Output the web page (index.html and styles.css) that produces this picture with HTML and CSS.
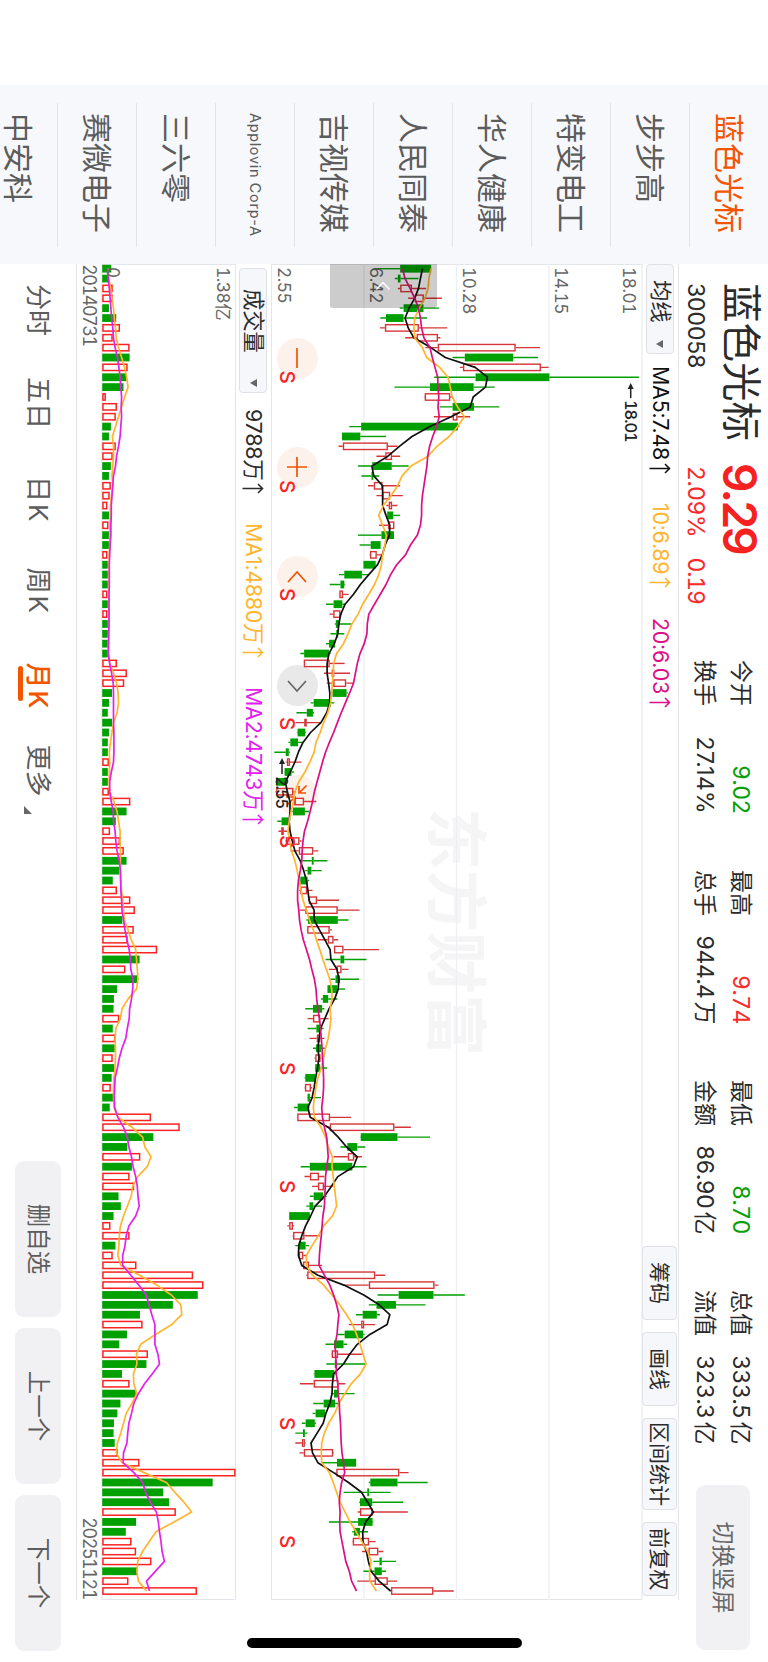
FILE: index.html
```html
<!DOCTYPE html>
<html lang="zh-CN">
<head>
<meta charset="utf-8">
<title>蓝色光标 300058</title>
<link rel="stylesheet" href="styles.css">
</head>
<body>
<div class="stage">
  <nav class="watchlist">
    <a class="stock active">蓝色光标</a>
    <a class="stock">步步高</a>
    <a class="stock">特变电工</a>
    <a class="stock">华人健康</a>
    <a class="stock">人民同泰</a>
    <a class="stock">吉视传媒</a>
    <a class="stock latin">Applovin Corp-A</a>
    <a class="stock">三六零</a>
    <a class="stock">赛微电子</a>
    <a class="stock">中安科</a>
  </nav>
  <main class="main">
    <header class="header">
      <div class="identity">
        <h1 class="name">蓝色光标</h1>
        <strong class="price">9.29</strong>
        <span class="code">300058</span>
        <span class="change"><span>2.09%</span><span class="delta">0.19</span></span>
      </div>
      <div class="quotes">
        <div class="quote"><span>今开</span><span class="value down">9.02</span></div>
        <div class="quote"><span>最高</span><span class="value up">9.74</span></div>
        <div class="quote"><span>最低</span><span class="value down">8.70</span></div>
        <div class="quote"><span>总值</span><span class="value">333.5<i class="unit">亿</i></span></div>
        <div class="quote"><span>换手</span><span class="percent">27.14%</span></div>
        <div class="quote"><span>总手</span><span class="value">944.4<i class="unit">万</i></span></div>
        <div class="quote"><span>金额</span><span class="value">86.90<i class="unit">亿</i></span></div>
        <div class="quote"><span>流值</span><span class="value">323.3<i class="unit">亿</i></span></div>
      </div>
      <button class="rotate">切换竖屏</button>
    </header>

    <div class="toolbar">
      <div class="picker">均线<i class="caret"></i></div>
      <span class="legend ma5">MA5:7.48<svg class="arrow" viewBox="0 0 11 22"><path d="M5.500 21.500V1.500M1 6L5.500 1.500L10 6"/></svg></span>
      <span class="legend ma10">10:6.89<svg class="arrow" viewBox="0 0 11 22"><path d="M5.500 21.500V1.500M1 6L5.500 1.500L10 6"/></svg></span>
      <span class="legend ma20">20:6.03<svg class="arrow" viewBox="0 0 11 22"><path d="M5.500 21.500V1.500M1 6L5.500 1.500L10 6"/></svg></span>
      <div class="tools">
        <button class="tool">筹码</button>
        <button class="tool">画线</button>
        <button class="tool wide">区间统计</button>
        <button class="tool">前复权</button>
      </div>
    </div>

    <section class="price-pane">
      <div class="controls">
        <button class="control"><svg viewBox="0 0 22 22"><path d="M1 11H21"/></svg></button>
        <button class="control"><svg viewBox="0 0 22 22"><path d="M1 11H21M11 1V21"/></svg></button>
        <button class="control"><svg viewBox="0 0 22 22"><path d="M16 2L6 11L16 20"/></svg></button>
        <button class="control muted"><svg viewBox="0 0 22 22"><path d="M6 2L16 11L6 20"/></svg></button>
        <button class="control"><svg viewBox="0 0 22 22"><path d="M1.500 1.500L9 9M9 2V9H2M20.500 20.500L13 13M20 13H13V20"/></svg></button>
      </div>
      <svg id="price-chart" class="price-chart" viewBox="0 0 1336 371"></svg>
      <div class="drawer"><svg viewBox="0 0 10 16"><path d="M8.500 1.500L1.500 8L8.500 14.500"/></svg></div>
    </section>

    <div class="volume-bar">
      <div class="picker">成交量<i class="caret"></i></div>
      <span class="legend vol">9788万<svg class="arrow" viewBox="0 0 11 22"><path d="M5.500 21.500V1.500M1 6L5.500 1.500L10 6"/></svg></span>
      <span class="legend ma10">MA1:4880万<svg class="arrow" viewBox="0 0 11 22"><path d="M5.500 21.500V1.500M1 6L5.500 1.500L10 6"/></svg></span>
      <span class="legend vma2">MA2:4743万<svg class="arrow" viewBox="0 0 11 22"><path d="M5.500 21.500V1.500M1 6L5.500 1.500L10 6"/></svg></span>
    </div>

    <svg id="volume-chart" class="volume-chart" viewBox="0 0 1336 134"></svg>

    <div class="dates"><span>20140731</span><span>20251121</span></div>

    <footer class="footer">
      <div class="periods">
        <a class="period">分时</a>
        <a class="period">五日</a>
        <a class="period spaced">日K</a>
        <a class="period spaced">周K</a>
        <a class="period spaced current">月K</a>
        <a class="period">更多<i class="corner"></i></a>
      </div>
      <div class="actions">
        <button class="action">删自选</button>
        <button class="action">上一个</button>
        <button class="action">下一个</button>
      </div>
    </footer>
  </main>
  <div class="home-indicator"></div>
</div>
<script src="chart.js"></script>
</body>
</html>
```
FILE: styles.css
```css
* { box-sizing: border-box; }

html, body {
  margin: 0;
  width: 768px;
  height: 1662px;
  overflow: hidden;
  background: #fff;
}

/* Landscape screen shown on a portrait display */
.stage {
  position: relative;
  display: flex;
  width: 1662px;
  height: 768px;
  padding-left: 85px;
  overflow: hidden;
  transform-origin: 0 0;
  transform: translateX(768px) rotate(90deg);
  background: #fff;
  color: #2b2b2b;
  font-family: Inter, "Noto Sans CJK SC", sans-serif;
  font-size: 23px;
  line-height: 1;
}

button {
  padding: 0;
  border: 0;
  color: inherit;
  font: inherit;
}

.watchlist {
  flex: none;
  width: 179px;
  height: 768px;
  padding: 0 17.500px;
  overflow: hidden;
  background: #f6f8fb;
}

.stock {
  display: flex;
  align-items: center;
  height: 79px;
  padding-left: 10.500px;
  border-bottom: 1px solid #e2e4e8;
  color: #5c5c5c;
  font-size: 30px;
  white-space: nowrap;
}

.stock.active { color: #f25400; }
.stock.latin { font-size: 14.500px; letter-spacing: 0.650px; }

.main {
  display: flex;
  flex-direction: column;
  width: 1398px;
}

.header {
  display: flex;
  width: 1398px;
  height: 90px;
  padding-left: 19px;
  background: linear-gradient(#e6e6e8, #e6e6e8) 0 100% / 1336px 1px no-repeat;
}

.identity {
  display: grid;
  flex: none;
  width: 377px;
  height: 89px;
  grid-template: 55px 34px / 180px 1fr;
  align-items: center;
}

.name { margin: 0; font-size: 39.500px; font-weight: 400; white-space: nowrap; }
.price { color: #f62121; font-size: 46px; font-weight: 600; letter-spacing: -2.700px; }
.code { font-size: 23px; letter-spacing: -0.100px; }

.change {
  display: flex;
  gap: 20.500px;
  padding-left: 3px;
  color: #fa2a2a;
  font-variant-numeric: tabular-nums;
  letter-spacing: -0.500px;
}

.delta { letter-spacing: -1.200px; }

.quotes {
  display: grid;
  flex: none;
  grid-template-columns: repeat(4, 154px);
  grid-auto-rows: 36px;
  column-gap: 56px;
  padding-top: 9px;
}

.quote {
  display: flex;
  align-items: center;
  justify-content: space-between;
  white-space: nowrap;
}

.value { font-variant-numeric: tabular-nums; letter-spacing: -0.500px; }
.percent { letter-spacing: 0.300px; }
.unit { margin-left: 3px; font-style: normal; }
.up { color: #fa2a2a; }
.down { color: #07a007; }

.rotate {
  width: 165px;
  height: 54px;
  margin: 18px 0 0 41px;
  border-radius: 9px;
  background: #f1f1f4;
  color: #666;
}

.toolbar {
  display: flex;
  align-items: center;
  width: 1336px;
  height: 36px;
}

.picker {
  display: flex;
  align-items: center;
  justify-content: space-between;
  width: 90px;
  height: 28px;
  padding: 0 5px 0 15px;
  border: 1px solid #dfe1e6;
  border-radius: 4px;
  background: #f6f7fa;
  font-size: 21.300px;
  white-space: nowrap;
}

.caret {
  border: 4px solid transparent;
  border-top: 7px solid #666;
  border-bottom: 0;
}

.legend {
  display: flex;
  align-items: center;
  font-size: 21.500px;
  letter-spacing: -0.300px;
  white-space: nowrap;
}

.arrow {
  width: 11px;
  height: 22px;
  margin-left: 3px;
  fill: none;
  stroke: currentColor;
  stroke-width: 1.500;
}

.ma5 { width: 137px; margin-left: 12px; color: #111; }
.ma10 { color: #ffb52e; }
.toolbar .ma10 { width: 115px; }
.ma20 { color: #dc0f87; }

.tools { display: flex; gap: 12px; margin-left: auto; padding-right: 4px; }

.tool {
  width: 74px;
  height: 35px;
  border: 1px solid #dfe1e6;
  border-radius: 4px;
  background: #f6f7fa;
  font-size: 21px;
  white-space: nowrap;
}

.tool.wide { width: 92px; }

.price-pane { position: relative; height: 371px; }
.price-chart { position: relative; display: block; width: 1336px; height: 371px; }
.volume-chart { display: block; width: 1336px; height: 134px; }

.price-chart, .volume-chart {
  overflow: visible;
  font-family: Inter, "Noto Sans CJK SC", sans-serif;
  font-variant-numeric: tabular-nums;
}

.frame { fill: none; stroke: #e3e6ea; stroke-width: 1; }
.grid { stroke: #eceff3; stroke-width: 1.300; }
.axis { fill: #666; font-size: 17.300px; letter-spacing: -0.500px; }
.watermark { fill: #f5f5f6; font-size: 62px; font-weight: 700; }
.rise { fill: none; stroke: #d63638; stroke-width: 1.400; }
.rise-wick { fill: none; stroke: #d63638; stroke-width: 1.400; }
.fall { fill: #00a000; }
.fall-wick { stroke: #00a000; stroke-width: 1.400; }
.vol-rise { fill: #fff; stroke: #fb2222; stroke-width: 1.500; }
.line { fill: none; stroke-width: 1.700; stroke-linejoin: round; }
.line-ma5 { stroke: #111; }
.line-ma10 { stroke: #ffb52e; }
.line-ma20 { stroke: #dc0f87; }
.line-vma2 { stroke: #e321ee; }
.signal { fill: #fb2424; font-size: 20.500px; font-weight: 500; text-anchor: middle; }
.peak { fill: #222; font-size: 16.500px; font-weight: 500; letter-spacing: -1.100px; }
.pointer { fill: none; stroke: #222; stroke-width: 1.500; }
.pointer-head { fill: #222; }

.drawer {
  position: absolute;
  left: 0;
  top: 205px;
  display: flex;
  align-items: center;
  justify-content: center;
  width: 44px;
  height: 107px;
  border-radius: 0 3px 3px 0;
  background: rgba(0, 0, 0, 0.2);
}

.drawer svg { width: 10px; height: 16px; fill: none; stroke: #fff; stroke-width: 1.300; }

.controls {
  position: absolute;
  left: 73.500px;
  top: 324px;
  display: flex;
  gap: 68.300px;
}

.control {
  display: flex;
  align-items: center;
  justify-content: center;
  width: 41px;
  height: 41px;
  border-radius: 50%;
  background: #fdf1eb;
  color: #f25400;
}

.control svg { width: 22px; height: 22px; fill: none; stroke: currentColor; stroke-width: 1.700; }
.control.muted { background: #e9e9e9; color: #666; }

.volume-bar {
  display: flex;
  align-items: center;
  width: 1336px;
  height: 35px;
  padding: 0 0 0 4px;
}

.volume-bar .picker { width: 125px; padding-left: 20px; }
.vol { width: 114px; margin-left: 16px; color: #2b2b2b; }
.volume-bar .ma10 { width: 164px; }
.vma2 { color: #e321ee; }

.dates {
  display: flex;
  justify-content: space-between;
  align-items: center;
  width: 1336px;
  height: 26px;
  padding: 0 1px 0 0;
  border-bottom: 1px solid #e6e6e8;
  color: #666;
  font-size: 18px;
  font-variant-numeric: tabular-nums;
  letter-spacing: -1.450px;
}

.footer {
  display: flex;
  align-items: center;
  justify-content: space-between;
  height: 76px;
  padding: 0 11px 0 20px;
}

.periods {
  display: grid;
  grid-template-columns: 93px 99px 91.500px 95px 82px 80px;
}

.period {
  position: relative;
  color: #5c5c5c;
  font-size: 26px;
  white-space: nowrap;
}

.period.spaced { letter-spacing: 2px; }
.period.current { color: #f25400; font-weight: 500; }

.period.current::after {
  content: "";
  position: absolute;
  left: 3px;
  bottom: -7px;
  width: 35px;
  height: 5px;
  border-radius: 3px;
  background: #f25400;
}

.corner {
  position: absolute;
  left: 61px;
  bottom: -1px;
  border-left: 8px solid transparent;
  border-bottom: 8px solid #666;
}

.actions { display: flex; gap: 11px; }

.action {
  width: 156px;
  height: 46px;
  border-radius: 9px;
  background: #f1f1f4;
  color: #5c5c5c;
  font-size: 23.500px;
}

.home-indicator {
  position: absolute;
  left: 1638px;
  top: 246px;
  width: 10px;
  height: 275px;
  border-radius: 5px;
  background: #000;
}
```
FILE: chart.js
```js
// Monthly rows: candle colour, low, body low, body high, high, volume, MA5, MA10, MA20, volume MA1, volume MA2.
// Prices use axis units where 475 = 2.55 and 1444 = 18.01; volumes use 32 = 0 and 382 = 1.38亿.
// A trailing R or G overrides the volume bar colour.
const rows = `G 742 812 893 893 56 870 892 818 47 46
G 798 806 813 860 48 865 887 825 50 48
R 806 812 843 880 60 860 885 838 54 51
R 833 850 874 921 60 850 877 850 58 53
G 811 821 873 914 50 835 862 860 62 55
G 760 775 821 882 69 825 850 865 64 57
R 759 772 861 935 79 833 848 868 67 60
R 825 855 911 917 60 848 850 874 69 62
R 878 910 1114 1178 104 892 870 890 75 66
G 949 981 1107 1172 104 930 881 896 83 72
R 968 976 1180 1200 99 1008 915 903 91 76
G 901 1009 1202 1436 96 1040 937 910 96 79
G 797 890 1004 1059 88 1035 943 911 100 81
R 875 876 943 948 42 1003 948 913 91 83
G 915 949 1005 1071 71 995 962 911 83 82 R
R 900 949 962 995 68 945 980 914 75 83
G 679 710 963 967 55 890 962 907 67 81
G 660 660 708 775 50 843 940 897 59 79
R 651 662 780 805 68 810 908 889 62 75
R 750 773 791 812 60 780 885 884 62 70
G 702 739 790 834 55 738 840 882 60 67
G 711 737 742 757 50 743 817 878 58 62
R 728 743 766 812 55 766 805 874 60 60
R 750 765 786 819 52 766 788 870 57 58
R 776 782 791 805 46 766 768 868 54 56
G 778 778 794 812 50 775 756 868 53 56
R 757 780 797 797 49 785 766 865 53 55
G 702 763 796 796 50 784 776 857 52 55
G 706 735 761 761 50 773 772 839 52 53
R 732 733 751 763 46 765 766 826 51 52
G 716 716 748 750 47 753 763 803 50 51
G 652 666 712 728 47 730 756 787 50 51
G 628 656 666 668 47 708 745 775 50 51
R 652 653 663 677 46 690 730 760 50 50
G 618 638 661 668 47 668 714 745 50 50
R 627 637 656 660 46 657 702 730 50 50
G 641 644 652 685 47 652 686 726 50 50
G 630 645 650 666 47 649 676 725 50 49
G 618 626 642 642 47 640 664 718 49 49
G 551 561 626 630 47 626 646 707 49 48
R 560 560 628 667 71 621 638 700 52 52
R 613 633 640 681 97 621 637 695 62 57
R 620 637 671 690 90 625 635 690 70 61
G 633 635 672 675 58 628 633 680 74 62
G 578 586 631 640 50 628 630 669 75 62
G 541 568 584 587 47 620 623 658 71 62
R 539 562 568 605 58 605 612 648 62 62 G
G 542 544 564 566 50 578 603 638 58 63
G 520 525 545 558 47 558 592 627 54 63
G 483 513 521 524 47 546 587 617 51 63
R 513 516 524 554 50 537 576 609 52 62
G 509 510 528 535 47 525 563 602 51 56
G 486 488 512 515 47 512 547 595 50 52
R 486 488 533 540 50 517 537 588 52 52
R 533 535 561 593 106 524 533 583 63 56
G 530 532 563 575 96 524 527 577 71 61
G 491 502 520 524 68 522 522 570 75 62
R 494 501 508 516 53 524 519 562 79 66
R 512 513 549 554 79 530 523 558 79 68
R 525 547 585 598 89 537 528 556 80 71
G 557 581 586 622 96 551 537 555 80 77
G 564 570 580 607 77 560 543 551 80 80
G 545 551 570 574 60 567 548 546 80 81
R 548 551 569 583 71 571 553 544 83 81
R 572 573 595 652 106 574 558 544 86 83
R 550 564 649 706 118 587 567 547 88 84
G 567 571 649 677 85 587 575 549 90 88
R 568 569 628 634 115 601 585 553 100 92
R 596 623 638 650 99 615 593 559 108 97
R 639 639 664 757 176 629 602 567 120 103
G 617 656 666 724 130 631 610 575 122 106
R 626 646 659 677 93 647 619 581 124 107
G 630 643 655 705 125 652 628 588 126 113
G 622 622 648 668 71 650 633 592 122 112
G 605 610 624 648 63 641 634 594 100 109
G 564 584 608 614 62 626 629 597 84 104
R 570 584 603 625 77 615 631 601 80 103
G 570 593 605 612 60 604 628 604 68 98
R 575 594 603 614 67 600 624 606 66 94
G 584 592 605 615 65 597 617 608 67 84
R 588 590 604 606 60 600 612 609 67 77
G 589 590 603 621 64 596 606 611 66 72
G 562 564 590 592 57 591 597 612 63 66
R 562 563 579 582 55 587 592 612 62 65
G 569 570 576 605 63 582 588 610 62 64
G 535 544 574 575 52 571 585 607 63 65
R 542 543 629 684 160 577 588 609 74 73
R 620 628 797 840 235 624 605 614 110 88
G 708 709 805 890 166 650 617 620 138 98
G 656 674 700 721 98 672 624 622 144 102
R 638 675 692 712 132 700 635 624 160 109
G 552 576 687 724 110 690 634 620 150 113
R 562 576 600 614 104 649 637 617 125 120
R 582 597 613 636 116 632 640 616 112 124
G 576 586 611 620 75 614 643 615 108 126
G 567 575 585 608 81 590 646 614 98 129
G 522 522 576 578 62 578 635 610 88 120
R 517 522 532 535 54 565 612 608 80 102
R 531 532 562 602 104 555 598 606 77 95
G 538 547 565 574 67 547 582 603 76 92
R 545 547 559 566 60 546 567 601 73 86
R 556 558 574 608 122 555 567 600 81 86
R 567 569 747 773 270 597 583 614 130 107
R 662 730 902 912 297 665 612 628 175 128
G 753 808 899 981 282 717 634 638 213 147
G 730 750 801 878 217 757 654 646 238 155
G 696 714 751 759 131 785 672 652 240 162
R 678 710 718 747 138 778 688 649 214 170
G 648 667 715 719 97 733 698 647 172 170
G 617 639 664 674 77 700 707 642 133 170
R 632 633 650 712 152 680 715 643 122 178
G 619 641 646 722 148 664 723 645 123 182
G 586 588 640 645 84 638 708 645 114 163
R 550 586 651 669 104 635 684 649 115 143
G 632 639 649 693 120 634 667 650 123 127
G 585 612 642 651 80 628 652 653 110 115
G 583 591 616 618 72 618 641 654 95 109
G 555 565 589 592 63 611 625 656 88 102
G 538 558 563 570 62 595 614 657 81 99
R 538 555 563 565 65 579 607 658 72 97 G
R 549 560 637 639 73 583 606 660 69 88
G 607 647 697 697 130 597 607 664 84 87 R
R 643 645 810 834 381 638 627 667 142 115
G 730 734 805 884 321 677 637 659 200 138
G 664 726 731 787 192 711 646 655 222 146
G 705 707 739 820 207 727 655 653 246 158
R 701 707 740 832 225 742 668 655 266 174
G 626 702 740 742 121 722 681 654 220 179
G 687 691 707 728 94 714 697 655 173 182
R 687 688 731 748 109 715 712 660 155 186
R 712 729 755 768 121 724 727 665 138 189
G 742 758 764 801 161 729 736 670 125 195 R
G 716 745 764 775 125 736 732 679 123 171
R 700 745 780 804 101 757 733 685 127 148
R 787 788 899 952 280 787 750 698 148 156`.split("\n").map(r => r.split(" "));

const STEP = 9.868;
const BODY = 7.8;
const SCALE = 2.6133;
const cx = i => 4.7 + i * STEP;
const py = v => (1444 - v) / SCALE;
const vy = v => (382 - v) / SCALE;

const line = (cls, col, fy) =>
  `<polyline class="line ${cls}" points="${rows.map((r, i) => cx(i).toFixed(1) + "," + fy(+r[col]).toFixed(1)).join(" ")}"/>`;

const box = (cls, x, top, bottom, inset) => {
  const h = Math.max(bottom - top - inset * 2, 1.2);
  return `<rect class="${cls}" x="${(x - BODY / 2 + inset).toFixed(2)}" y="${(top + inset).toFixed(2)}" width="${(BODY - inset * 2).toFixed(2)}" height="${h.toFixed(2)}"/>`;
};

const candles = rows.map((r, i) => {
  const x = cx(i);
  const [low, lo, hi, high] = r.slice(1, 5).map(v => py(+v));
  const rise = r[0] === "R";
  const wick = `<path class="${rise ? "rise" : "fall"}-wick" d="M${x.toFixed(2)} ${high.toFixed(2)}V${hi.toFixed(2)}M${x.toFixed(2)} ${lo.toFixed(2)}V${low.toFixed(2)}"/>`;
  return wick + box(rise ? "rise" : "fall", x, hi, lo, rise ? 0.7 : 0);
}).join("");

const gridline = y => `<path class="grid" d="M0 ${y}H1336"/>`;
const label = (x, y, t) => `<text class="axis" x="${x}" y="${y}">${t}</text>`;
const signals = [377, 486.5, 594.5, 723.5, 841.5, 1068.5, 1186.5, 1423.5, 1541.5]
  .map(x => `<text class="signal" x="${x - 264}" y="362.500">S</text>`).join("");

document.getElementById("price-chart").innerHTML = `
  <text class="watermark" x="544" y="209">东方财富</text>
  <rect class="frame" x="0.5" y="0" width="1335" height="370.500"/>
  ${gridline(93)}${gridline(185.5)}${gridline(278)}
  ${candles}
  ${line("line-ma5", 6, py)}${line("line-ma10", 7, py)}${line("line-ma20", 8, py)}
  ${label(3, 19, "18.01")}${label(3, 87, "14.15")}${label(3, 179.5, "10.28")}${label(3, 272, "6.42")}${label(3, 364.5, "2.55")}
  ${signals}
  <path class="pointer" d="M124 11.300H134"/><path class="pointer-head" d="M119 11.300L125 8.300V14.300Z"/>
  <text class="peak" x="136" y="17.500">18.01</text>
  <path class="pointer" d="M499 360H510"/><path class="pointer-head" d="M494 360L500 357V363Z"/>
  <text class="peak" x="512" y="366.500">2.55</text>`;

const bars = rows.map((r, i) => {
  const rise = (r[11] || r[0]) === "R";
  return box(rise ? "vol-rise" : "fall", cx(i), vy(+r[5]), 133.8, rise ? 0.75 : 0);
}).join("");

document.getElementById("volume-chart").innerHTML = `
  <rect class="frame" x="0.500" y="0.500" width="1335" height="133.500"/>
  ${bars}
  ${line("line-ma10", 9, vy)}${line("line-vma2", 10, vy)}
  ${label(3, 19, "1.38亿")}${label(3, 129, "0")}`;
```
